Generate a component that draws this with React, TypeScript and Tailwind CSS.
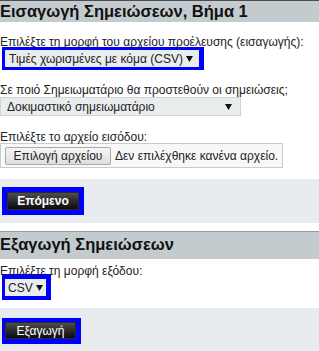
import * as React from 'react'

// small black triangle used by the fake selects
function Caret() {
  return (
    <svg width="7" height="6" viewBox="0 0 7 6" className="shrink-0">
      <polygon points="0,0 7,0 3.5,6" fill="#111" />
    </svg>
  )
}

function DarkButton({ label, bold }: { label: string; bold?: boolean }) {
  return (
    <button
      type="button"
      className={`flex h-full w-full items-center justify-center whitespace-nowrap border border-[#2a2a2a] bg-gradient-to-b from-[#4e4e4e] to-[#0c0c0c] text-[12px] leading-none text-white ${bold ? 'font-bold' : ''}`}
    >
      {label}
    </button>
  )
}

export default function App() {
  return (
    <div className="h-[351px] w-[319px] overflow-hidden whitespace-nowrap bg-white font-['Liberation_Sans',Arial,sans-serif] text-[12px] text-[#222]">
      {/* Step 1: import */}
      <div className="h-[22px] border-t border-[#4d4d4d] bg-[#c4cbce]">
        <h2 className="text-[16.5px] font-bold leading-[21px] text-[#111]">Εισαγωγή Σημειώσεων, Βήμα 1</h2>
      </div>

      <p className="mt-[12px] leading-[16px]">Επιλέξτε τη μορφή του αρχείου προέλευσης (εισαγωγής):</p>
      <div className="ml-[2px] mt-[-3px] w-[202px] border-[3px] border-r-[5px] border-[#0000ff]">
        <div className="flex h-[17px] items-center justify-between bg-[#eaedee] pl-[4px] pr-[6px]">
          <span className="leading-none">Τιμές χωρισμένες με κόμα (CSV)</span>
          <Caret />
        </div>
      </div>

      <p className="mt-[12px] leading-[16px]">Σε ποιό Σημειωματάριο θα προστεθούν οι σημειώσεις;</p>
      <div className="mt-[-1px] flex h-[19px] w-[241px] items-center justify-between border border-[#cfd4d6] bg-[#eaedee] pl-[6px] pr-[8px]">
        <span className="leading-none">Δοκιμαστικό σημειωματάριο</span>
        <Caret />
      </div>

      <p className="mt-[13px] leading-[16px]">Επιλέξτε το αρχείο εισόδου:</p>
      <div className="mt-[-2px] flex h-[25px] w-[283px] items-center gap-[4px] border border-[#c8cccf] bg-[#f7f8f8] pl-[4px]">
        <button
          type="button"
          className="h-[18px] w-[106px] rounded-[2px] border border-[#a9a9a9] bg-gradient-to-b from-[#f6f6f6] to-[#dedede] text-[12px] leading-none text-[#222]"
        >
          Επιλογή αρχείου
        </button>
        <span className="leading-none">Δεν επιλέχθηκε κανένα αρχείο.</span>
      </div>

      <div className="mt-[11px] h-[44px] bg-[#e9ecee] pt-[8px]">
        <div className="ml-[2px] h-[28px] w-[82px] bg-[#0000ff] p-[5px]">
          <DarkButton label="Επόμενο" bold />
        </div>
      </div>

      {/* Export */}
      <div className="mt-[8px] h-[28px] border-t border-[#9a9a9a] bg-[#c4cbce] pt-[2px]">
        <h2 className="text-[16.5px] font-bold leading-[21px] text-[#111]">Εξαγωγή Σημειώσεων</h2>
      </div>

      <p className="mt-[4px] leading-[16px]">Επιλέξτε τη μορφή εξόδου:</p>
      <div className="ml-[2px] mt-[-5px] w-[49px] border-[4px] border-l-[3px] border-r-[5px] border-t-[5px] border-[#0000ff]">
        <div className="flex h-[17px] items-center justify-between bg-[#eaedee] pl-[3px] pr-[3px]">
          <span className="leading-none">CSV</span>
          <Caret />
        </div>
      </div>

      <div className="mt-[8px] h-[44px] bg-[#e9ecee] pt-[10px]">
        <div className="ml-[2px] h-[26px] w-[79px] bg-[#0000ff] pb-[5px] pl-[3px] pr-[5px] pt-[4px]">
          <DarkButton label="Εξαγωγή" />
        </div>
      </div>
    </div>
  )
}
